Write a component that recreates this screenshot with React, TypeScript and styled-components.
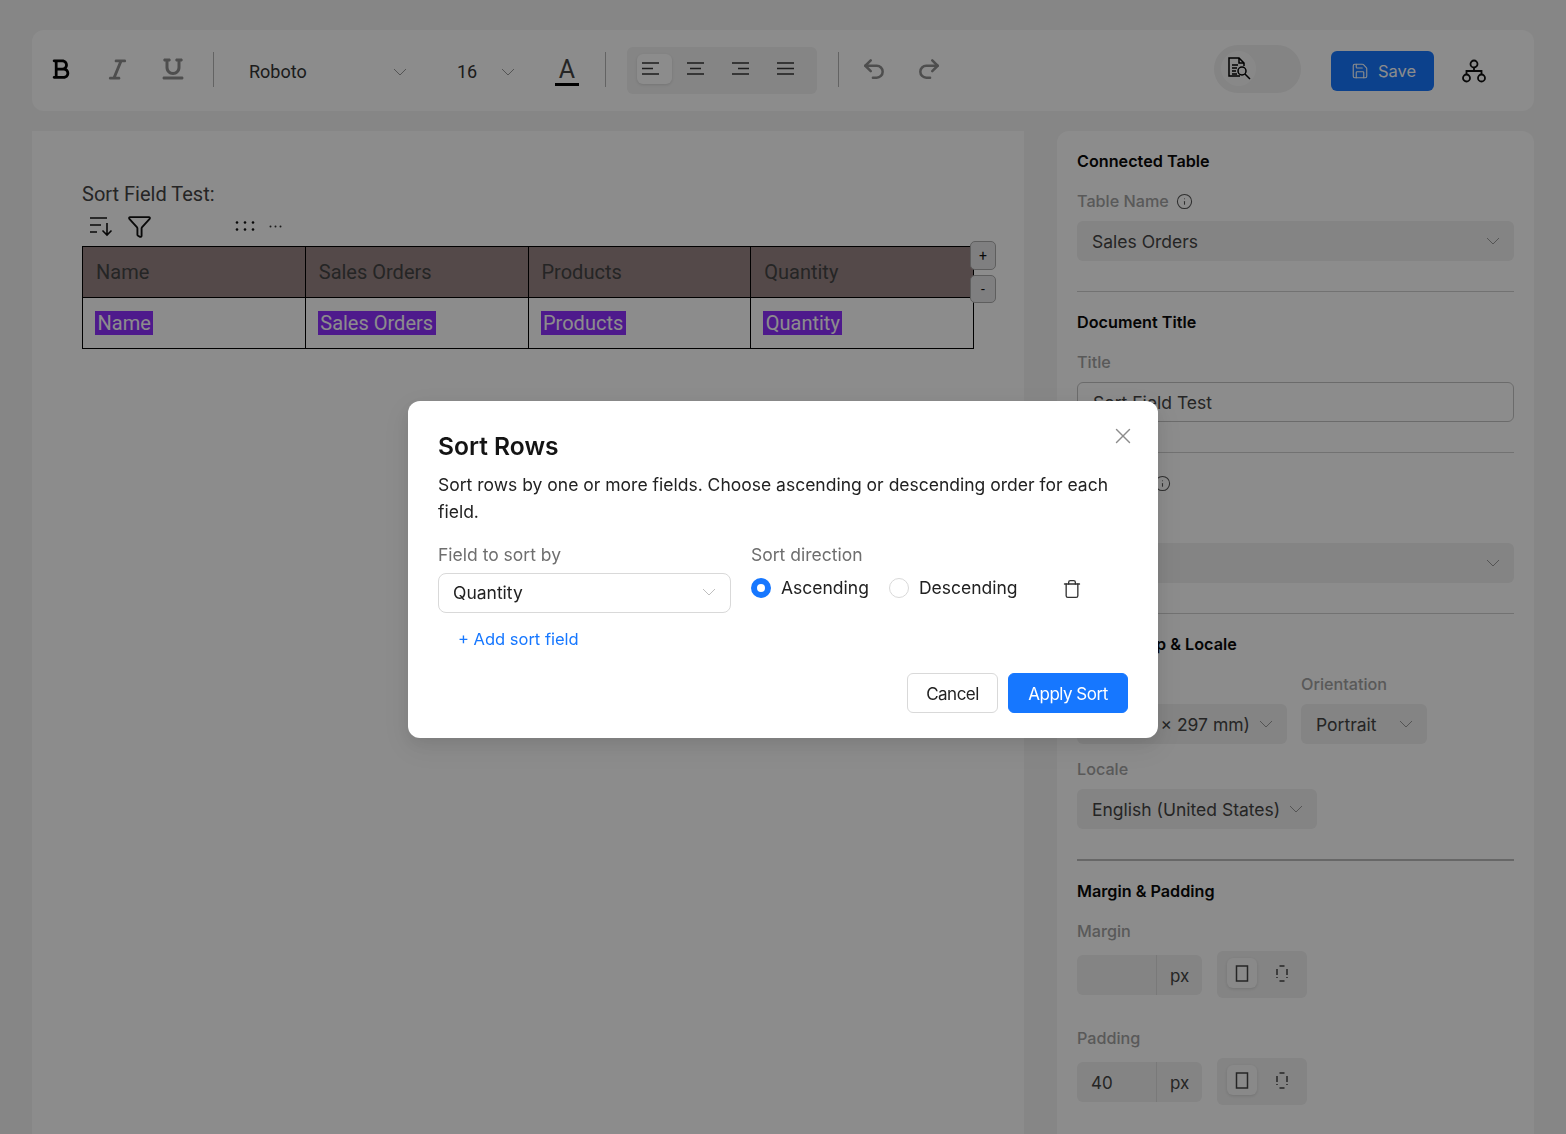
import React from 'react';
import styled, { createGlobalStyle } from 'styled-components';
import { Filter, Info, Redo2, Save, Trash, Undo2, X } from 'lucide-react';
import { FaBold, FaItalic, FaUnderline } from 'react-icons/fa6';

const GlobalStyle = createGlobalStyle`
  html, body {
    margin: 0;
    height: 100%;
    overflow: hidden;
    background: #f5f5f5;
    font-family: Inter, "Liberation Sans", sans-serif;
    color: #111;
  }
  * { box-sizing: border-box; }
`;

const Page = styled.div`
  height: 1134px;
  overflow: hidden;
  padding: 30px 32px 0;
`;

/* toolbar */
const Toolbar = styled.div`
  display: flex;
  align-items: center;
  height: 81px;
  padding-left: 1px;
  background: #fff;
  border-radius: 12px;
`;

const ToolBtn = styled.div<{ $color?: string }>`
  display: flex;
  justify-content: center;
  align-items: center;
  width: 56px;
  margin-top: -3px;
  color: ${(p) => p.$color || '#000'};
`;

const VDivider = styled.div<{ $left: number }>`
  width: 1px;
  height: 35px;
  margin-left: ${(p) => p.$left}px;
  margin-top: -2px;
  background: #b5b5b5;
`;

const ToolSelect = styled.div<{ $left: number; $width: number }>`
  display: flex;
  justify-content: space-between;
  align-items: center;
  width: ${(p) => p.$width}px;
  margin-left: ${(p) => p.$left}px;
  margin-top: 2px;
  font: 400 18px Roboto, sans-serif;
  color: #333;
`;

const ColorBtn = styled.div`
  width: 24px;
  margin-left: 40px;
  margin-top: 1px;
  font: 400 25px/27px Roboto, sans-serif;
  text-align: center;
  color: #444;
  border-bottom: 3px solid #000;
`;

const AlignGroup = styled.div`
  display: flex;
  gap: 10px;
  width: 190px;
  height: 47px;
  margin-left: 21px;
  margin-top: -1px;
  padding: 7px 10px;
  background: #f2f2f2;
  border-radius: 6px;
`;

const AlignBtn = styled.div<{ $active?: boolean }>`
  display: flex;
  align-items: center;
  width: 35px;
  height: 30px;
  padding-left: 5px;
  border-radius: 6px;
  background: ${(p) => (p.$active ? '#fff' : 'transparent')};
  box-shadow: ${(p) => (p.$active ? '0 1px 3px rgba(0,0,0,0.12)' : 'none')};
`;

const HistoryBtn = styled.div<{ $left: number }>`
  display: flex;
  margin-left: ${(p) => p.$left}px;
  margin-top: -3px;
  color: #8e8e8e;
`;

const PreviewPill = styled.div`
  display: flex;
  align-items: center;
  width: 87px;
  height: 48px;
  margin-left: auto;
  margin-top: -4px;
  padding-left: 7px;
  background: #f0f0f0;
  border-radius: 24px;
`;

const PreviewKnob = styled.div`
  display: flex;
  justify-content: center;
  align-items: center;
  width: 35px;
  height: 35px;
  border-radius: 50%;
  background: #f8f8f8;
`;

const SaveBtn = styled.div`
  display: flex;
  align-items: center;
  gap: 9px;
  width: 103px;
  height: 40px;
  margin-left: 30px;
  margin-top: 1px;
  padding-left: 20px;
  background: #1677ff;
  border-radius: 6px;
  color: #fff;
  font-size: 16.5px;
`;

const NetworkBtn = styled.div`
  display: flex;
  width: 26px;
  margin: 1px 46px 0 28px;
`;

/* body */
const Main = styled.div`
  display: flex;
  margin-top: 20px;
  gap: 33px;
`;

const Canvas = styled.div`
  flex: 0 0 992px;
  height: 1003px;
  padding: 51px 50px 0;
  background: #fff;
  font-family: Roboto, sans-serif;
`;

const DocTitle = styled.div`
  font-size: 20px;
  line-height: 24px;
  color: #444;
`;

const TableBar = styled.div`
  display: flex;
  align-items: center;
  height: 30px;
  padding-left: 7px;
  margin-top: 5px;
  margin-bottom: 5px;
`;

const BarIcon = styled.div<{ $left: number }>`
  display: flex;
  margin-left: ${(p) => p.$left}px;
`;

const TableWrap = styled.div`
  position: relative;
  width: 892px;
`;

const DocTable = styled.table`
  width: 892px;
  table-layout: fixed;
  border-collapse: collapse;
`;

const HeadCell = styled.th`
  height: 51px;
  padding: 0 13px;
  border: 1px solid #000;
  background: #998686;
  font-size: 20px;
  font-weight: 400;
  text-align: left;
  color: #444;
`;

const BodyCell = styled.td`
  height: 51px;
  padding: 0 12px;
  border: 1px solid #000;
  font-size: 20px;
`;

const Token = styled.span`
  padding: 0 2.5px;
  background: #8e30ff;
  color: #fff;
`;

const EdgeBtn = styled.div<{ $top: number; $height: number }>`
  position: absolute;
  left: 888px;
  top: ${(p) => p.$top}px;
  display: flex;
  justify-content: center;
  align-items: center;
  width: 26px;
  height: ${(p) => p.$height}px;
  background: #e8e8ea;
  border: 1px solid #ababab;
  border-radius: 5px;
  font-size: 14px;
  color: #111;
`;

/* right panel */
const Panel = styled.div`
  flex: 0 0 477px;
  height: 1003px;
  padding: 20px 20px 0;
  background: #fff;
  border-radius: 12px 12px 0 0;
`;

const SectionTitle = styled.div`
  font-size: 16.2px;
  font-weight: 600;
  line-height: 20px;
  color: #0a0a0a;
`;

const FieldLabel = styled.div<{ $top?: number }>`
  display: flex;
  align-items: center;
  gap: 7px;
  margin-top: ${(p) => p.$top ?? 20}px;
  margin-bottom: 10px;
  font-size: 16.2px;
  font-weight: 500;
  line-height: 20px;
  color: #a3a3a3;
`;

const SelectBox = styled.div<{ $width?: number }>`
  display: flex;
  justify-content: space-between;
  align-items: center;
  width: ${(p) => (p.$width ? `${p.$width}px` : '100%')};
  height: 40px;
  padding: 0 14px 0 15px;
  background: #f0f0f0;
  border-radius: 6px;
  font-size: 17.5px;
  color: #444;
`;

const TextInput = styled.div`
  display: flex;
  align-items: center;
  height: 40px;
  padding: 0 15px;
  border: 1px solid #c4c4c4;
  border-radius: 6px;
  font-size: 17.5px;
  color: #444;
`;

const Rule = styled.div<{ $thick?: boolean; $top?: number }>`
  height: ${(p) => (p.$thick ? 2 : 1)}px;
  margin: ${(p) => p.$top ?? 30}px 0 20px;
  background: ${(p) => (p.$thick ? '#bcbcbc' : '#cfcfcf')};
`;

const TwoCols = styled.div`
  display: flex;
  gap: 14px;
`;

const SizeRow = styled.div`
  display: flex;
  align-items: center;
  gap: 15px;
  height: 47px;
`;

const UnitInput = styled.div`
  display: flex;
  align-items: center;
  width: 125px;
  height: 40px;
  background: #f0f0f0;
  border-radius: 6px;
  font-size: 17px;
  color: #444;
`;

const UnitValue = styled.div`
  width: 79px;
  padding-left: 14px;
  padding-top: 2px;
`;

const UnitSuffix = styled.div`
  flex: 1;
  height: 100%;
  padding-left: 13px;
  line-height: 43px;
  border-left: 1px solid #ddd;
`;

const DeviceGroup = styled.div`
  display: flex;
  gap: 10px;
  width: 90px;
  height: 47px;
  padding: 7px 10px;
  background: #f0f0f0;
  border-radius: 6px;
`;

const DeviceBtn = styled.div<{ $active?: boolean }>`
  display: flex;
  justify-content: center;
  align-items: center;
  width: 30px;
  height: 30px;
  border-radius: 6px;
  background: ${(p) => (p.$active ? '#fafafa' : 'transparent')};
  box-shadow: ${(p) => (p.$active ? '0 1px 3px rgba(0,0,0,0.12)' : 'none')};
`;

/* modal */
const Mask = styled.div`
  position: fixed;
  inset: 0;
  background: rgba(0, 0, 0, 0.45);
`;

const Modal = styled.div`
  position: fixed;
  left: 408px;
  top: 401px;
  width: 750px;
  height: 337px;
  padding: 30px;
  background: #fff;
  border-radius: 12px;
  box-shadow: 0 6px 16px rgba(0, 0, 0, 0.08), 0 9px 28px 8px rgba(0, 0, 0, 0.05);
`;

const CloseBtn = styled.div`
  position: absolute;
  right: 22px;
  top: 22px;
  display: flex;
  color: #8c8c8c;
`;

const ModalTitle = styled.div`
  font-size: 24.6px;
  font-weight: 600;
  line-height: 31px;
  color: #141414;
`;

const ModalText = styled.div`
  margin-top: 9px;
  font-size: 17.5px;
  line-height: 27px;
  color: #222;
`;

const SortRow = styled.div`
  display: flex;
  margin-top: 19px;
`;

const SortCol = styled.div<{ $width: number; $left?: number }>`
  width: ${(p) => p.$width}px;
  margin-left: ${(p) => p.$left ?? 0}px;
`;

const SortLabel = styled.div`
  font-size: 17.5px;
  line-height: 22px;
  color: #6e6e6e;
`;

const FieldSelect = styled.div`
  display: flex;
  justify-content: space-between;
  align-items: center;
  height: 40px;
  margin-top: 7px;
  padding: 0 14px 2px;
  border: 1px solid #d9d9d9;
  border-radius: 8px;
  font-size: 17.5px;
  color: #222;
`;

const RadioRow = styled.div`
  display: flex;
  align-items: center;
  height: 24px;
  margin-top: 10px;
`;

const RadioDot = styled.span<{ $checked?: boolean; $left?: number }>`
  flex: none;
  width: 20px;
  height: 20px;
  margin-left: ${(p) => p.$left ?? 0}px;
  margin-right: 10px;
  border-radius: 50%;
  background: #fff;
  border: ${(p) => (p.$checked ? '6px solid #1677ff' : '1px solid #d9d9d9')};
`;

const RadioText = styled.span`
  font-size: 17.5px;
  color: #222;
  margin-top: -1px;
`;

const TrashBtn = styled.div`
  display: flex;
  margin-left: 44px;
  margin-top: 2px;
  color: #333;
`;

const AddLink = styled.div`
  margin-top: 14px;
  padding-left: 20px;
  font-size: 16.5px;
  line-height: 24px;
  color: #1677ff;
`;

const ModalFooter = styled.div`
  display: flex;
  justify-content: flex-end;
  gap: 10px;
  margin-top: 22px;
`;

const FooterBtn = styled.div<{ $primary?: boolean }>`
  display: flex;
  justify-content: center;
  align-items: center;
  width: ${(p) => (p.$primary ? 120 : 91)}px;
  height: 40px;
  padding-top: 2px;
  border-radius: 6px;
  font-size: 17px;
  letter-spacing: -0.5px;
  border: 1px solid ${(p) => (p.$primary ? '#1677ff' : '#d9d9d9')};
  background: ${(p) => (p.$primary ? '#1677ff' : '#fff')};
  color: ${(p) => (p.$primary ? '#fff' : '#222')};
`;

/* drawings */
const Chevron = ({ color = '#9a9a9a' }: { color?: string }) => (
  <svg width="14" height="8" viewBox="0 0 14 8" fill="none">
    <path d="M1 1l6 6 6-6" stroke={color} strokeWidth="1" />
  </svg>
);

const AlignIcon = ({ lines }: { lines: [number, number][] }) => (
  <svg width="17" height="13" viewBox="0 0 17 13" fill="none" stroke="#333" strokeWidth="1.5">
    {lines.map(([a, b], i) => (
      <path key={i} d={`M${a} ${1 + i * 5.5}H${b}`} />
    ))}
  </svg>
);

const SortIcon = () => (
  <svg width="24" height="22" viewBox="0 0 24 22" fill="none" stroke="#111" strokeWidth="1.6">
    <path d="M1 3h17M1 10h11M1 17h7" />
    <path d="M18 8v12M13.500 15.500L18 20l4.500-4.500" />
  </svg>
);

const GripDots = () => (
  <svg width="20" height="10" viewBox="0 0 20 10" fill="#111">
    {[2, 10, 18].map((x) => (
      <React.Fragment key={x}>
        <circle cx={x} cy="1.500" r="1.300" />
        <circle cx={x} cy="8.500" r="1.300" />
      </React.Fragment>
    ))}
  </svg>
);

const MoreDots = () => (
  <svg width="13" height="3" viewBox="0 0 13 3" fill="#333">
    <circle cx="1.500" cy="1.500" r="1" />
    <circle cx="6.500" cy="1.500" r="1" />
    <circle cx="11.500" cy="1.500" r="1" />
  </svg>
);

const DocSearch = () => (
  <svg width="24" height="26" viewBox="0 0 24 26" fill="none" stroke="#000" strokeWidth="1.500">
    <path d="M13 20H2V2h10l5 5v3" />
    <path d="M12 2v5h5" />
    <path d="M5 9h6M5 12h5M5 15h4M5 18h5" />
    <circle cx="15" cy="15" r="4" />
    <path d="M18 18l5 5" />
  </svg>
);

const NetworkIcon = () => (
  <svg width="24" height="24" viewBox="0 0 24 24" fill="none" stroke="#111" strokeWidth="1.800">
    <circle cx="12" cy="5" r="3.500" />
    <circle cx="4.500" cy="19" r="3.500" />
    <circle cx="19.500" cy="19" r="3.500" />
    <path d="M12 8.500V12M4.500 15.500V12h15v3.500" />
  </svg>
);

const PageIcon = ({ dashed }: { dashed?: boolean }) => (
  <svg width="14" height="17" viewBox="0 0 14 17" fill="none" stroke="#444" strokeWidth="1.500">
    {dashed ? (
      <path d="M2 4v9M12 4v9M4.500 1h5M4.500 16h5" strokeDasharray="6 2" />
    ) : (
      <rect x="1.500" y="1" width="11" height="15" />
    )}
  </svg>
);

const COLUMNS = ['Name', 'Sales Orders', 'Products', 'Quantity'];

const App: React.FC = () => (
  <>
    <GlobalStyle />
    <Page>
      <Toolbar>
        <ToolBtn><FaBold size={22} /></ToolBtn>
        <ToolBtn $color="#8e8e8e"><FaItalic size={23} /></ToolBtn>
        <ToolBtn $color="#8e8e8e"><FaUnderline size={24} /></ToolBtn>
        <VDivider $left={12} />
        <ToolSelect $left={35} $width={158}>Roboto<Chevron /></ToolSelect>
        <ToolSelect $left={50} $width={58}>16<Chevron /></ToolSelect>
        <ColorBtn>A</ColorBtn>
        <VDivider $left={26} />
        <AlignGroup>
          <AlignBtn $active><AlignIcon lines={[[0, 17], [0, 11], [0, 17]]} /></AlignBtn>
          <AlignBtn><AlignIcon lines={[[0, 17], [3, 14], [0, 17]]} /></AlignBtn>
          <AlignBtn><AlignIcon lines={[[0, 17], [6, 17], [0, 17]]} /></AlignBtn>
          <AlignBtn><AlignIcon lines={[[0, 17], [0, 17], [0, 17]]} /></AlignBtn>
        </AlignGroup>
        <VDivider $left={21} />
        <HistoryBtn $left={22}><Undo2 size={26} strokeWidth={2.3} /></HistoryBtn>
        <HistoryBtn $left={29}><Redo2 size={26} strokeWidth={2.3} /></HistoryBtn>
        <PreviewPill>
          <PreviewKnob><DocSearch /></PreviewKnob>
        </PreviewPill>
        <SaveBtn><Save size={18} color="#fff" strokeWidth={1.5} />Save</SaveBtn>
        <NetworkBtn><NetworkIcon /></NetworkBtn>
      </Toolbar>

      <Main>
        <Canvas>
          <DocTitle>Sort Field Test:</DocTitle>
          <TableBar>
            <SortIcon />
            <BarIcon $left={14}><Filter size={25} strokeWidth={1.8} color="#111" /></BarIcon>
            <BarIcon $left={83}><GripDots /></BarIcon>
            <BarIcon $left={14}><MoreDots /></BarIcon>
          </TableBar>
          <TableWrap>
            <DocTable>
              <thead>
                <tr>{COLUMNS.map((c) => <HeadCell key={c}>{c}</HeadCell>)}</tr>
              </thead>
              <tbody>
                <tr>{COLUMNS.map((c) => <BodyCell key={c}><Token>{c}</Token></BodyCell>)}</tr>
              </tbody>
            </DocTable>
            <EdgeBtn $top={-5} $height={29}>+</EdgeBtn>
            <EdgeBtn $top={29} $height={28}>-</EdgeBtn>
          </TableWrap>
        </Canvas>

        <Panel>
          <SectionTitle>Connected Table</SectionTitle>
          <FieldLabel>Table Name <Info size={17} strokeWidth={1.5} color="#555" /></FieldLabel>
          <SelectBox>Sales Orders<Chevron /></SelectBox>
          <Rule />

          <SectionTitle>Document Title</SectionTitle>
          <FieldLabel>Title</FieldLabel>
          <TextInput>Sort Field Test</TextInput>
          <Rule />

          <FieldLabel $top={0}>Row Size <Info size={17} strokeWidth={1.5} color="#555" /></FieldLabel>
          <FieldLabel>Source</FieldLabel>
          <SelectBox>Name<Chevron /></SelectBox>
          <Rule />

          <SectionTitle>Page Setup &amp; Locale</SectionTitle>
          <TwoCols>
            <div>
              <FieldLabel>Page Size</FieldLabel>
              <SelectBox $width={210}>A4 (210 × 297 mm)<Chevron /></SelectBox>
            </div>
            <div>
              <FieldLabel>Orientation</FieldLabel>
              <SelectBox $width={126}>Portrait<Chevron /></SelectBox>
            </div>
          </TwoCols>
          <FieldLabel $top={15}>Locale</FieldLabel>
          <SelectBox $width={240}>English (United States)<Chevron /></SelectBox>
          <Rule $thick />

          <SectionTitle>Margin &amp; Padding</SectionTitle>
          <FieldLabel>Margin</FieldLabel>
          <SizeRow>
            <UnitInput><UnitValue /><UnitSuffix>px</UnitSuffix></UnitInput>
            <DeviceGroup>
              <DeviceBtn $active><PageIcon /></DeviceBtn>
              <DeviceBtn><PageIcon dashed /></DeviceBtn>
            </DeviceGroup>
          </SizeRow>
          <FieldLabel $top={30}>Padding</FieldLabel>
          <SizeRow>
            <UnitInput><UnitValue>40</UnitValue><UnitSuffix>px</UnitSuffix></UnitInput>
            <DeviceGroup>
              <DeviceBtn $active><PageIcon /></DeviceBtn>
              <DeviceBtn><PageIcon dashed /></DeviceBtn>
            </DeviceGroup>
          </SizeRow>
        </Panel>
      </Main>
    </Page>

    <Mask />
    <Modal>
      <CloseBtn><X size={26} strokeWidth={1.3} /></CloseBtn>
      <ModalTitle>Sort Rows</ModalTitle>
      <ModalText>
        Sort rows by one or more fields. Choose ascending or descending order for each field.
      </ModalText>
      <SortRow>
        <SortCol $width={293}>
          <SortLabel>Field to sort by</SortLabel>
          <FieldSelect>Quantity<Chevron color="#bfbfbf" /></FieldSelect>
        </SortCol>
        <SortCol $width={340} $left={20}>
          <SortLabel>Sort direction</SortLabel>
          <RadioRow>
            <RadioDot $checked />
            <RadioText>Ascending</RadioText>
            <RadioDot $left={20} />
            <RadioText>Descending</RadioText>
            <TrashBtn><Trash size={20} strokeWidth={1.6} /></TrashBtn>
          </RadioRow>
        </SortCol>
      </SortRow>
      <AddLink>+ Add sort field</AddLink>
      <ModalFooter>
        <FooterBtn>Cancel</FooterBtn>
        <FooterBtn $primary>Apply Sort</FooterBtn>
      </ModalFooter>
    </Modal>
  </>
);

export default App;
